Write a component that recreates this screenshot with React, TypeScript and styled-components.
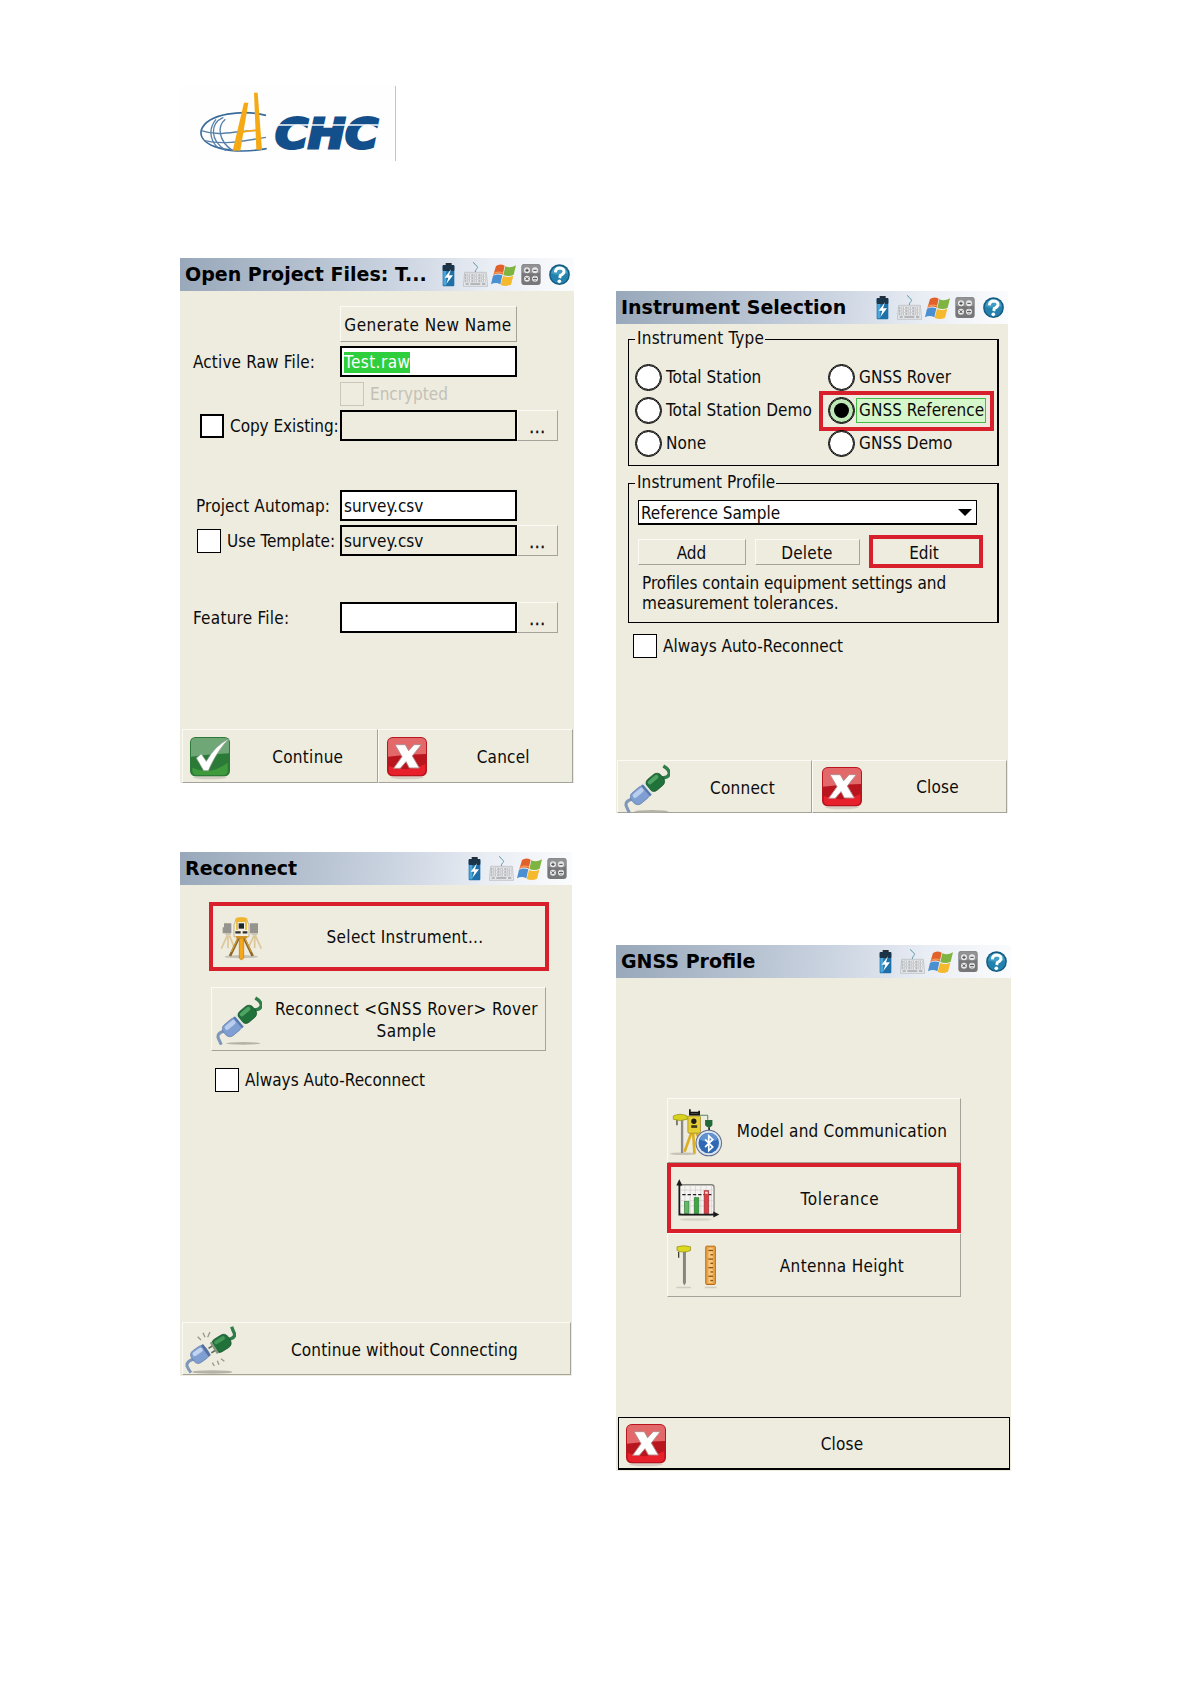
import * as React from 'react'
import styled, { createGlobalStyle, css } from 'styled-components'

const face = '#eeebdf'
const ink = '#0b0b0b'
const marker = '#d8202c'

const GlobalStyle = createGlobalStyle`
  * {
    box-sizing: border-box;
  }

  body {
    margin: 0;
    background: #fff;
    color: ${ink};
    font-family: 'DejaVu Sans Condensed', 'DejaVu Sans', sans-serif;
    font-size: 17px;
  }

  svg {
    display: block;
    flex: none;
  }
`

/* ---------- page ---------- */

const Page = styled.main`
  width: 1191px;
  height: 1684px;
  padding: 86px 0 0 180px;
  overflow: hidden;
`

const Brand = styled.header`
  width: 216px;
  height: 75px;
  background: #fdfefd;
  border-right: 1px solid #c4c4c4;
`

const Columns = styled.div`
  display: grid;
  grid-template-columns: 394px 395px;
  column-gap: 42px;
  align-items: start;
  margin-top: 97px;
`

const Column = styled.div<{ $top?: number; $gap: number }>`
  display: flex;
  flex-direction: column;
  gap: ${p => p.$gap}px;
  padding-top: ${p => p.$top ?? 0}px;
`

/* ---------- device screen ---------- */

const Screen = styled.section<{ $width: number; $height: number }>`
  display: flex;
  flex-direction: column;
  width: ${p => p.$width}px;
  height: ${p => p.$height}px;
  background: ${face};
`

const TitleBar = styled.div`
  display: flex;
  align-items: center;
  justify-content: space-between;
  flex: none;
  height: 33px;
  padding: 0 4px 0 5px;
  background: linear-gradient(97deg, #98a8ba 0%, #b3bfce 30%, #cbd4e1 55%, #e9edf4 78%, #fbfcfd 100%);
`

const Title = styled.h1`
  margin: 0;
  padding-bottom: 2px;
  color: #000;
  font: bold 19px 'DejaVu Sans', sans-serif;
  white-space: nowrap;
`

const Tray = styled.div`
  display: flex;
  align-items: center;
`

const TrayIcon = styled.svg<{ $after?: number }>`
  height: 25px;
  margin-right: ${p => p.$after ?? 0}px;
`

const Body = styled.div<{ $pad?: string }>`
  flex: 1;
  min-height: 0;
  padding: ${p => p.$pad ?? '0'};
`

const Footer = styled.div<{ $pad?: string }>`
  display: flex;
  flex: none;
  padding: ${p => p.$pad ?? '0 1px 0 2px'};
`

const Text = styled.span<{ $track?: number }>`
  letter-spacing: ${p => p.$track ?? 0}px;
  white-space: pre;
`

/* ---------- controls ---------- */

const raised = css`
  border: 1px solid;
  border-color: #fbfaf4 #a5a399 #a5a399 #fbfaf4;
`

const Button = styled.button<{ $width: number; $height: number; $marked?: boolean }>`
  display: flex;
  align-items: center;
  justify-content: center;
  flex: none;
  width: ${p => p.$width}px;
  height: ${p => p.$height}px;
  padding: 2px 1px 0 0;
  background: transparent;
  color: inherit;
  font: inherit;
  ${raised}
  ${p => p.$marked && css`
    padding-right: 4px;
    border: 4px solid ${marker};
  `}
`

const TileButton = styled.button<{ $height: number; $look?: 'marked' | 'default' }>`
  display: grid;
  grid-template-columns: 55px 1fr;
  align-items: center;
  flex: 1;
  width: 100%;
  height: ${p => p.$height}px;
  padding: 3px 0 0 1px;
  background: transparent;
  color: inherit;
  font: inherit;
  line-height: 21.5px;
  text-align: center;
  ${raised}
  ${p => p.$look === 'default' && css`
    border: 1px solid #000;
    border-bottom-width: 2px;
  `}
  ${p => p.$look === 'marked' && css`
    grid-template-columns: 48px 1fr;
    padding-left: 4px;
    border: 4px solid ${marker};
  `}
`

const IconSlot = styled.span<{ $nudge?: number }>`
  display: flex;
  justify-content: center;
  padding-right: ${p => p.$nudge ?? 0}px;
`

const CheckBox = styled.span<{ $disabled?: boolean; $thick?: boolean }>`
  flex: none;
  width: 24px;
  height: 24px;
  background: ${p => (p.$disabled ? 'transparent' : '#fff')};
  border: ${p => (p.$thick ? 2 : 1)}px solid ${p => (p.$disabled ? '#c9c7bb' : '#000')};
`

const CheckRow = styled.label<{ $disabled?: boolean; $pad?: string }>`
  display: flex;
  align-items: center;
  gap: 6px;
  padding: ${p => p.$pad ?? '0'};
  color: ${p => (p.$disabled ? '#c3c1b6' : 'inherit')};
`

const FormRow = styled.div<{ $before: number; $height?: number }>`
  display: grid;
  grid-template-columns: 160px 177px 41px;
  align-items: center;
  height: ${p => p.$height ?? 31}px;
  margin-top: ${p => p.$before}px;
`

const FieldLabel = styled.label<{ $indent: number }>`
  display: flex;
  align-items: center;
  gap: 6px;
  padding-left: ${p => p.$indent}px;
`

const Field = styled.div<{ $readOnly?: boolean }>`
  display: flex;
  align-items: center;
  height: 31px;
  padding: 1px 0 0 2px;
  background: ${p => (p.$readOnly ? face : '#fff')};
  border: 2px solid #000;
`

const Selected = styled.span`
  padding: 0 0 1px;
  background: #2fce3c;
  color: #fff;
  letter-spacing: 0.45px;
  line-height: 20px;
`

const Dots = styled(Text)`
  padding: 1px 0 0 1px;
  letter-spacing: 0.6px;
  -webkit-text-stroke: 0.3px;
`

const Group = styled.fieldset<{ $height: number; $before?: number; $indent: number }>`
  height: ${p => p.$height}px;
  margin: ${p => p.$before ?? 0}px 0 0;
  padding: 0 0 0 ${p => p.$indent}px;
  border: 1px solid #000;
  border-right-width: 2px;
`

const Legend = styled.legend<{ $shift: number }>`
  height: 20px;
  margin-left: ${p => p.$shift}px;
  padding: 0 1px 0 2px;
  line-height: 18px;
`

const Options = styled.div`
  display: grid;
  grid-template-columns: 193px auto;
  grid-auto-rows: 33px;
  align-items: center;
  margin-top: 12px;
`

const Option = styled.label<{ $marked?: boolean }>`
  position: relative;
  display: flex;
  align-items: center;
  gap: 2px;
  width: max-content;

  /* annotation drawn over the option */
  ${p => p.$marked && css`
    &::after {
      content: '';
      position: absolute;
      inset: -7px -8px -8px -10px;
      border: 4px solid ${marker};
    }
  `}
`

const Radio = styled.span<{ $on?: boolean }>`
  display: grid;
  place-items: center;
  width: 25px;
  height: 25px;
  background: ${p => (p.$on ? '#bfeab8' : '#fff')};
  border: 1.5px solid #000;
  border-radius: 50%;
  outline: 0.5px solid #000;

  &::before {
    content: '';
    width: 15px;
    height: 15px;
    background: ${p => (p.$on ? '#000' : 'transparent')};
    border-radius: 50%;
  }
`

const OptionText = styled(Text)<{ $on?: boolean }>`
  padding: 0 1px 0 2px;
  border: 1px solid transparent;
  line-height: 23px;
  ${p => p.$on && css`
    background: #d6f6cb;
    border-color: #45bd48;
  `}
`

const Select = styled.div`
  display: flex;
  align-items: center;
  justify-content: space-between;
  width: 339px;
  height: 25px;
  margin-top: 7px;
  padding: 1px 4px 0 2px;
  background: #fff;
  border: 1px solid #000;
  border-bottom-width: 2px;
`

const Arrow = styled.span`
  border: 7px solid transparent;
  border-top-color: #000;
  border-bottom-width: 0;
`

const ButtonRow = styled.div`
  display: flex;
  align-items: center;
  gap: 9px;
  margin-top: 10px;
`

const Hint = styled.p`
  margin: 5px 0 0;
  padding-left: 4px;
  line-height: 20px;
  white-space: pre;
`

const Stack = styled.div<{ $gap?: number; $pad: string }>`
  display: flex;
  flex-direction: column;
  gap: ${p => p.$gap ?? 0}px;
  padding: ${p => p.$pad};

  > button {
    flex: none;
  }
`

/* ---------- drawings ---------- */

function Logo() {
  return (
    <svg width='215' height='75' viewBox='30 18 645 225'>
      <g fill='none' stroke='#5880a8' strokeWidth='4'>
        <path d='M288 106 C220 88 112 100 94 150 C82 198 180 226 290 206' stroke='#3a6b9b' strokeWidth='5' />
        <path d='M160 112 C120 130 118 180 168 212' />
        <path d='M166 118 C140 140 146 184 188 212' />
        <path d='M94 152 C150 172 200 150 262 151' />
        <path d='M104 182 C160 196 225 182 288 172' />
        <path d='M138 118 C116 144 118 178 142 202' />
      </g>
      <path d='M222 68 H235 L211 212 H188 Z' fill='#f4a915' />
      <path d='M252 38 H263 L276 209 H259 Z' fill='#f4a915' />
      <path d='M205 160 Q235 150 266 151' fill='none' stroke='#f4a915' strokeWidth='5' />
      <text
        x='316'
        y='203'
        fill='#134f8a'
        stroke='#134f8a'
        strokeWidth='9'
        fontFamily='DejaVu Sans'
        fontWeight='bold'
        fontStyle='italic'
        fontSize='122'
        textLength='308'
        lengthAdjust='spacingAndGlyphs'
      >
        CHC
      </text>
      <path d='M318 135 H625' stroke='#fdfefd' strokeWidth='5' />
    </svg>
  )
}

function Battery() {
  return (
    <TrayIcon viewBox='0 0 39 75' width='13' $after={8}>
      <rect x='11' y='3' width='18' height='9' fill='#222e3a' />
      <rect x='2' y='9' width='35' height='64' rx='3' fill='#1f6fa8' />
      <rect x='2' y='9' width='35' height='18' rx='3' fill='#1b3448' />
      <rect x='4' y='27' width='9' height='43' fill='#4aa6d8' />
      <path d='M27 22 L8 47 H19 L13 66 L33 40 H21 Z' fill='#fff' />
    </TrayIcon>
  )
}

function Keyboard() {
  const rows = [36, 45, 54]
  const cols = [6, 13, 20, 27, 34, 41, 48, 55, 62]
  return (
    <TrayIcon viewBox='0 0 75 75' width='25' $after={3}>
      <path d='M37 30 C37 18 47 22 42 13 Q36 6 30 1' fill='none' stroke='#5a97a8' strokeWidth='3' />
      <path d='M5 31 H70 L74 73 H1 Z' fill='#e6e8ea' stroke='#b4b7ba' strokeWidth='2' />
      {rows.map(y => cols.map(x => (
        <rect key={`${x}-${y}`} x={x} y={y} width='5' height='6' fill='#fff' stroke='#abaeb2' strokeWidth='1.4' />
      )))}
      <path d='M8 66 H17 M22 66 H52 M57 66 H67' stroke='#a2a6aa' strokeWidth='4' />
    </TrayIcon>
  )
}

function Flag() {
  return (
    <TrayIcon viewBox='0 0 75 75' width='25' $after={5}>
      <path d='M15 12 Q27 3 41 11 L35 38 Q22 31 7 39 Z' fill='#e2602a' />
      <path d='M43 13 Q58 20 75 10 L68 38 Q54 45 37 39 Z' fill='#7fb441' />
      <path d='M6 41 Q20 34 34 40 L28 67 Q14 59 0 67 Z' fill='#4a8fd0' />
      <path d='M36 42 Q51 49 67 41 L60 68 Q46 75 29 69 Z' fill='#f5b92e' />
      <path d='M10 34 Q23 27 36 33' fill='none' stroke='#f39a55' strokeWidth='4' />
    </TrayIcon>
  )
}

function Calculator({ last }: { last?: boolean }) {
  return (
    <TrayIcon viewBox='0 0 60 75' width='20' $after={last ? 1 : 8}>
      <rect x='1' y='6' width='58' height='63' rx='9' fill='#77777a' />
      <rect x='3' y='7' width='54' height='27' rx='8' fill='#929295' />
      <g fill='#e9e9e9'>
        <circle cx='18' cy='25' r='9' />
        <circle cx='42' cy='25' r='9' />
        <circle cx='18' cy='50' r='9' />
        <circle cx='42' cy='50' r='9' />
      </g>
      <path
        d='M13 25 H23 M18 20 V30 M37 25 H47 M14 46 L22 54 M22 46 L14 54 M36 50 H48 M42 44 V46 M42 54 V56'
        stroke='#444'
        strokeWidth='3'
      />
    </TrayIcon>
  )
}

function Help() {
  return (
    <TrayIcon viewBox='0 0 63 75' width='21'>
      <circle cx='31.5' cy='38' r='31' fill='#14597f' />
      <circle cx='31.5' cy='38' r='27' fill='#2382ad' />
      <path d='M6 34 A26 26 0 0 1 57 34 Q31 44 6 34' fill='#3f9cc2' />
      <path d='M19 31 Q20 18 32 18 Q46 19 45 30 Q43 37 34 41 L32 48' fill='none' stroke='#fff' strokeWidth='9' />
      <circle cx='31' cy='58' r='5.5' fill='#fff' />
    </TrayIcon>
  )
}

function CheckIcon() {
  return (
    <svg width='42' height='44' viewBox='0 0 126 132'>
      <ellipse cx='63' cy='124' rx='50' ry='6' fill='#cfccc0' />
      <rect x='3' y='3' width='120' height='118' rx='16' fill='#2b7a38' />
      <path d='M6 62 V18 Q6 6 20 6 H106 Q120 6 120 18 V52 Q62 54 6 62' fill='#6fa876' />
      <path d='M10 95 Q63 120 116 80 V104 Q116 116 104 117 H22 Q10 116 10 104 Z' fill='#3f9a3c' />
      <path d='M22 66 L37 54 L52 76 Q76 30 120 8 Q84 44 58 104 H44 Z' fill='#fff' stroke='#8c9a8c' strokeWidth='2' />
    </svg>
  )
}

function CrossIcon() {
  return (
    <svg width='42' height='44' viewBox='0 0 126 132'>
      <ellipse cx='63' cy='124' rx='50' ry='6' fill='#d8cdc3' />
      <rect x='3' y='3' width='120' height='118' rx='17' fill='#b9151f' />
      <path d='M6 62 V20 Q6 6 22 6 H104 Q120 6 120 20 V54 Q62 54 6 62' fill='#e2686a' />
      <path d='M8 90 Q63 112 118 84 V102 Q118 117 102 117 H24 Q8 117 8 102 Z' fill='#e8202c' />
      <path
        d='M27 26 H58 L68 44 L84 26 H106 L79 60 L100 96 H70 L60 77 L43 97 H23 L48 62 Z'
        fill='#fff'
        stroke='#b9898a'
        strokeWidth='3'
      />
    </svg>
  )
}

function PlugIcon() {
  return (
    <svg width='46' height='49' viewBox='0 0 138 147'>
      <ellipse cx='82' cy='142' rx='52' ry='4' fill='#b5b3a8' />
      <path d='M112 42 Q134 42 136 28 Q136 16 118 6' fill='none' stroke='#2f7d49' strokeWidth='10' />
      <path d='M30 104 Q4 108 6 124 Q10 134 16 146' fill='none' stroke='#7f97b8' strokeWidth='9' />
      <g transform='rotate(-40 72 74)'>
        <rect x='12' y='53' width='58' height='42' rx='16' fill='#7f9fd2' stroke='#5f7aa8' strokeWidth='2' />
        <rect x='22' y='58' width='38' height='14' rx='6' fill='#b9cdee' />
        <rect x='74' y='52' width='54' height='43' rx='16' fill='#20713a' stroke='#174f2b' strokeWidth='2' />
        <rect x='82' y='57' width='38' height='12' rx='6' fill='#4fa463' />
        <rect x='62' y='54' width='8' height='41' fill='#5878ab' />
        <rect x='69' y='52' width='6' height='43' fill='#dfe9e0' />
      </g>
    </svg>
  )
}

function UnpluggedIcon() {
  return (
    <svg width='51' height='49' viewBox='0 0 153 147'>
      <ellipse cx='82' cy='138' rx='60' ry='5' fill='#b5b3a8' />
      <path d='M128 40 Q150 38 149 24 Q144 14 140 2' fill='none' stroke='#2f7d49' strokeWidth='10' />
      <path d='M30 98 Q4 104 6 120 Q10 130 18 140' fill='none' stroke='#7f97b8' strokeWidth='9' />
      <g transform='rotate(-35 46 84)'>
        <rect x='18' y='63' width='52' height='43' rx='15' fill='#7f9fd2' stroke='#5f7aa8' strokeWidth='2' />
        <rect x='26' y='68' width='34' height='13' rx='6' fill='#c3d4f0' />
        <rect x='62' y='64' width='8' height='41' rx='2' fill='#55719f' />
      </g>
      <g transform='rotate(-32 106 52)'>
        <path d='M68 46 H84 M68 62 H84' stroke='#5b6b5b' strokeWidth='5' />
        <rect x='82' y='32' width='54' height='44' rx='15' fill='#20713a' stroke='#174f2b' strokeWidth='2' />
        <rect x='91' y='37' width='36' height='12' rx='6' fill='#43985a' />
        <rect x='80' y='34' width='7' height='40' rx='2' fill='#8a9a80' />
      </g>
      <path
        d='M38 32 L48 42 M54 20 L60 34 M75 18 L68 34 M82 110 L88 120 M97 104 L102 116 M108 98 L118 106'
        stroke='#9a988c'
        strokeWidth='4'
      />
    </svg>
  )
}

function TotalStationIcon() {
  return (
    <svg width='45' height='45' viewBox='127 214 135 135'>
      <ellipse cx='194' cy='336' rx='50' ry='5' fill='#c6c3b6' />
      <g fill='none' stroke='#dcc79a' strokeWidth='5'>
        <path d='M152 272 L134 312 M154 272 V310 M158 272 L174 312 M232 272 L214 312 M234 272 V310 M236 272 L254 312' />
      </g>
      <path d='M142 236 H164 V266 H138 V248 H142 Z M220 236 H244 V266 H220 Z' fill='#96948f' />
      <path d='M146 268 H162 M224 268 H242' stroke='#c9c5b8' strokeWidth='6' />
      <path d='M186 280 L160 334 M202 280 L228 334' stroke='#8a6a2a' strokeWidth='8' />
      <path d='M183 282 L164 322 M205 282 L224 322' stroke='#e2a436' strokeWidth='3' />
      <path d='M188 280 H201 V340 Q194 350 188 340 Z' fill='#f2a71c' stroke='#b87a12' strokeWidth='2' />
      <path d='M176 222 Q194 214 212 222 V256 H176 Z' fill='#efb52e' />
      <path d='M172 240 L178 226 H210 L217 240 V276 H172 Z' fill='#f3efe2' stroke='#a89a6a' strokeWidth='2' />
      <rect x='178' y='219' width='32' height='13' rx='3' fill='#efb52e' />
      <path d='M181 232 V256 M208 232 V256' stroke='#efb52e' strokeWidth='5' />
      <rect x='186' y='236' width='16' height='16' fill='#1d2a26' />
      <path d='M176 263 H192 M198 263 H212' stroke='#33312c' strokeWidth='7' />
      <rect x='178' y='274' width='34' height='7' fill='#d0952a' />
    </svg>
  )
}

function ModelIcon() {
  return (
    <svg width='53' height='51' viewBox='28 50 160 152'>
      <ellipse cx='68' cy='190' rx='40' ry='4' fill='#c6c3b6' />
      <path d='M61 88 H68 V188 H61 Z' fill='#8b8b86' />
      <path d='M49 88 V104' stroke='#4a4a3c' strokeWidth='4' />
      <path d='M38 76 Q58 66 80 76 V86 Q60 94 38 86 Z' fill='#d8d21e' stroke='#8c8812' strokeWidth='2' />
      <path d='M92 128 L72 184 M98 128 L102 190 M108 128 L124 160' stroke='#dcae22' strokeWidth='8' />
      <rect x='82' y='76' width='38' height='52' rx='4' fill='#e6cf35' stroke='#8f7d1c' strokeWidth='2' />
      <path d='M88 56 V72 H116 V60 M88 66 H116' fill='none' stroke='#111' strokeWidth='5' />
      <circle cx='100' cy='92' r='8' fill='#1d1d1d' />
      <rect x='92' y='104' width='18' height='8' fill='#403a18' />
      <path d='M118 74 H142 V88' fill='none' stroke='#56875c' strokeWidth='3' />
      <path d='M134 88 H156 V104 Q146 118 134 104 Z' fill='#226b38' />
      <path d='M146 110 V124' stroke='#222' strokeWidth='5' />
      <circle cx='145' cy='158' r='40' fill='#5b6b86' />
      <circle cx='145' cy='158' r='37' fill='#dde4ef' />
      <circle cx='145' cy='158' r='31' fill='#2f69b4' />
      <path d='M118 148 A28 28 0 0 1 172 148 Q145 160 118 148' fill='#5f93d2' />
      <path d='M134 147 L157 170 L145 181 V136 L157 147 L134 170' fill='none' stroke='#fff' strokeWidth='5' />
    </svg>
  )
}

function ToleranceIcon() {
  return (
    <svg width='45' height='44' viewBox='42 260 136 132'>
      <ellipse cx='105' cy='385' rx='48' ry='4' fill='#d6d3c7' />
      <rect x='56' y='280' width='104' height='90' rx='8' fill='#f6f4f1' stroke='#84847f' strokeWidth='4' />
      <path
        d='M72 282 V368 M88 282 V368 M104 282 V368 M120 282 V368 M136 282 V368 M152 282 V368 M58 296 H158 M58 328 H158 M58 344 H158'
        stroke='#d0cccc'
        strokeWidth='2'
      />
      <path d='M64 310 H152' stroke='#222' strokeWidth='4' strokeDasharray='10 6' />
      <rect x='71' y='331' width='13' height='36' fill='#68b668' stroke='#2b7f35' strokeWidth='2' />
      <rect x='100' y='319' width='14' height='48' fill='#3fa348' stroke='#2b7f35' strokeWidth='2' />
      <rect x='130' y='298' width='14' height='69' fill='#d84046' stroke='#a3262e' strokeWidth='2' />
      <rect x='133' y='301' width='8' height='6' fill='#f4dcd8' />
      <path d='M55 276 V370 H164' fill='none' stroke='#1a1a1a' strokeWidth='5' />
      <path d='M55 263 L64 282 H46 Z M176 370 L158 361 V379 Z' fill='#1a1a1a' />
    </svg>
  )
}

function AntennaIcon() {
  const ticks = [474, 487, 500, 513, 526, 539, 552, 565]
  return (
    <svg width='43' height='45' viewBox='42 455 130 135'>
      <path d='M46 586 H90 M132 586 H168' stroke='#cfccc0' strokeWidth='4' />
      <path d='M66 474 H75 V572 L70 580 L66 572 Z' fill='#85857f' />
      <path d='M53 478 V496' stroke='#3e3e34' strokeWidth='4' />
      <path d='M48 463 Q68 456 89 463 V474 Q68 484 48 474 Z' fill='#dcd71f' stroke='#8c8812' strokeWidth='2' />
      <rect x='135' y='461' width='29' height='116' rx='3' fill='#eda342' stroke='#b06a1c' strokeWidth='3' />
      <rect x='143' y='466' width='13' height='106' fill='#f7c77c' />
      {ticks.map((y, i) => (
        <path key={y} d={`M${i % 2 ? 149 : 143} ${y} H157`} stroke='#8a5416' strokeWidth='4' />
      ))}
    </svg>
  )
}

/* ---------- screens ---------- */

function Bar({ title, help = true }: { title: string; help?: boolean }) {
  return (
    <TitleBar>
      <Title>{title}</Title>
      <Tray>
        <Battery />
        <Keyboard />
        <Flag />
        <Calculator last={!help} />
        {help && <Help />}
      </Tray>
    </TitleBar>
  )
}

interface TileProps {
  icon: React.ReactNode
  height: number
  track?: number
  look?: 'marked' | 'default'
  nudge?: number
  children: React.ReactNode
}

function Tile({ icon, height, track, look, nudge, children }: TileProps) {
  return (
    <TileButton $height={height} $look={look}>
      <IconSlot $nudge={nudge}>{icon}</IconSlot>
      <Text $track={track}>{children}</Text>
    </TileButton>
  )
}

function Browse() {
  return (
    <Button $width={41} $height={31}>
      <Dots>...</Dots>
    </Button>
  )
}

function ProjectFiles() {
  return (
    <Screen $width={394} $height={525}>
      <Bar title='Open Project Files: T...' />
      <Body>
        <FormRow $before={15} $height={36}>
          <span />
          <Button $width={177} $height={36}>
            <Text $track={0.45}>Generate New Name</Text>
          </Button>
        </FormRow>
        <FormRow $before={4}>
          <FieldLabel $indent={13}><Text $track={0.15}>Active Raw File:</Text></FieldLabel>
          <Field><Selected>Test.raw</Selected></Field>
        </FormRow>
        <FormRow $before={5} $height={24}>
          <span />
          <CheckRow $disabled>
            <CheckBox $disabled />
            <Text>Encrypted</Text>
          </CheckRow>
        </FormRow>
        <FormRow $before={4}>
          <FieldLabel $indent={20}>
            <CheckBox $thick />
            <Text $track={-0.05}>Copy Existing:</Text>
          </FieldLabel>
          <Field $readOnly />
          <Browse />
        </FormRow>
        <FormRow $before={49}>
          <FieldLabel $indent={16}><Text $track={0.15}>Project Automap:</Text></FieldLabel>
          <Field><Text>survey.csv</Text></Field>
        </FormRow>
        <FormRow $before={4}>
          <FieldLabel $indent={17}>
            <CheckBox />
            <Text>Use Template:</Text>
          </FieldLabel>
          <Field $readOnly><Text>survey.csv</Text></Field>
          <Browse />
        </FormRow>
        <FormRow $before={46}>
          <FieldLabel $indent={13}><Text $track={0.25}>Feature File:</Text></FieldLabel>
          <Field />
          <Browse />
        </FormRow>
      </Body>
      <Footer>
        <Tile icon={<CheckIcon />} height={54} track={0.3} nudge={3}>Continue</Tile>
        <Tile icon={<CrossIcon />} height={54} track={0.2}>Cancel</Tile>
      </Footer>
    </Screen>
  )
}

const instruments = [
  { name: 'Total Station' },
  { name: 'GNSS Rover' },
  { name: 'Total Station Demo' },
  { name: 'GNSS Reference', on: true },
  { name: 'None' },
  { name: 'GNSS Demo' },
]

function InstrumentSelection() {
  return (
    <Screen $width={392} $height={522}>
      <Bar title='Instrument Selection' />
      <Body $pad='5px 9px 0 12px'>
        <Group $height={137} $indent={7}>
          <Legend $shift={-1}><Text $track={0.22}>Instrument Type</Text></Legend>
          <Options>
            {instruments.map(({ name, on }) => (
              <Option key={name} $marked={on}>
                <Radio $on={on} />
                <OptionText $on={on} $track={0.05}>{name}</OptionText>
              </Option>
            ))}
          </Options>
        </Group>
        <Group $height={150} $before={7} $indent={9}>
          <Legend $shift={-3}><Text $track={0.1}>Instrument Profile</Text></Legend>
          <Select>
            <Text>Reference Sample</Text>
            <Arrow />
          </Select>
          <ButtonRow>
            <Button $width={108} $height={26}><Text>Add</Text></Button>
            <Button $width={105} $height={26}><Text $track={0.2}>Delete</Text></Button>
            <Button $width={114} $height={33} $marked><Text>Edit</Text></Button>
          </ButtonRow>
          <Hint>{'Profiles contain equipment settings and\nmeasurement tolerances.'}</Hint>
        </Group>
        <CheckRow $pad='11px 0 0 5px'>
          <CheckBox />
          <Text>Always Auto-Reconnect</Text>
        </CheckRow>
      </Body>
      <Footer $pad='0 1px'>
        <Tile icon={<PlugIcon />} height={53} track={0.25}>Connect</Tile>
        <Tile icon={<CrossIcon />} height={53} track={0.2}>Close</Tile>
      </Footer>
    </Screen>
  )
}

function Reconnect() {
  return (
    <Screen $width={392} $height={524}>
      <Bar title='Reconnect' help={false} />
      <Body>
        <Stack $pad='17px 23px 0 29px'>
          <Tile icon={<TotalStationIcon />} height={69} track={0.3} look='marked'>Select Instrument...</Tile>
        </Stack>
        <Stack $pad='16px 26px 0 31px'>
          <Tile icon={<PlugIcon />} height={64} track={0.43} nudge={3}>{'Reconnect <GNSS Rover> Rover\nSample'}</Tile>
        </Stack>
        <CheckRow $pad='17px 0 0 35px'>
          <CheckBox />
          <Text>Always Auto-Reconnect</Text>
        </CheckRow>
      </Body>
      <Footer $pad='0 1px 1px 2px'>
        <Tile icon={<UnpluggedIcon />} height={53} track={0.15} nudge={3}>Continue without Connecting</Tile>
      </Footer>
    </Screen>
  )
}

function GnssProfile() {
  return (
    <Screen $width={395} $height={526}>
      <Bar title='GNSS Profile' />
      <Body>
        <Stack $pad='120px 50px 0 51px'>
          <Tile icon={<ModelIcon />} height={65} track={0.23}>Model and Communication</Tile>
          <Tile icon={<ToleranceIcon />} height={70} track={0.7} nudge={4} look='marked'>Tolerance</Tile>
          <Tile icon={<AntennaIcon />} height={64} track={0.33}>Antenna Height</Tile>
        </Stack>
      </Body>
      <Footer $pad='0 1px 1px 2px'>
        <Tile icon={<CrossIcon />} height={53} track={0.2} nudge={3} look='default'>Close</Tile>
      </Footer>
    </Screen>
  )
}

export default function App() {
  return (
    <>
      <GlobalStyle />
      <Page>
        <Brand>
          <Logo />
        </Brand>
        <Columns>
          <Column $gap={69}>
            <ProjectFiles />
            <Reconnect />
          </Column>
          <Column $top={33} $gap={132}>
            <InstrumentSelection />
            <GnssProfile />
          </Column>
        </Columns>
      </Page>
    </>
  )
}
